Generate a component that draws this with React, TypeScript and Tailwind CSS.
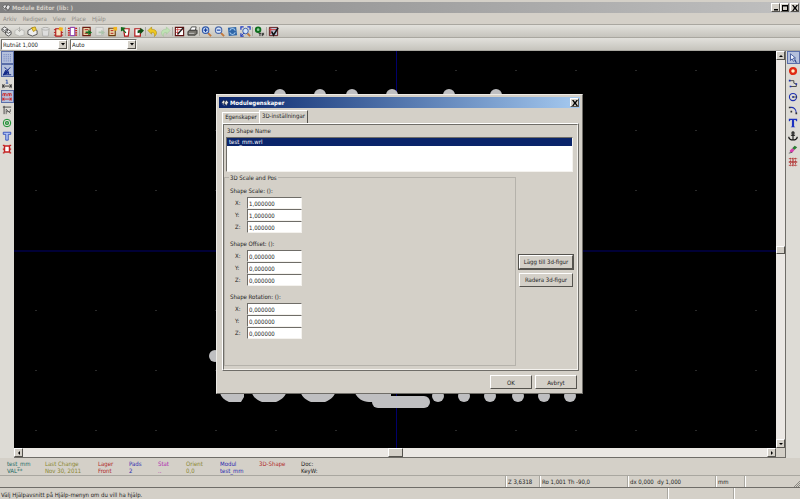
import React from 'react';
import clsx from 'clsx';

const raised = 'border border-t-white border-l-white border-r-[#55534e] border-b-[#55534e] bg-[#d4d0c8]';
const sunken = 'border border-t-[#6f6d68] border-l-[#6f6d68] border-r-[#f4f2ee] border-b-[#f4f2ee]';

// All icons share a 12x12 drawing area
const icons: Record<string, React.ReactNode> = {
  module: (
    <g stroke="#333" strokeWidth=".7">
      <path d="M1 5l3-3 2 2-2 4zM5 6l3-4 3 3-3 5z" fill="#e4e4e4" />
      <path d="M2 7l3 3" stroke="#eee" />
    </g>
  ),
  libSelect: (
    <g fill="#eee" stroke="#444" strokeWidth=".9">
      <path d="M1 3l3-2 3 2v3L4 7 1 5zM5 6l3-2 3 2v3l-3 2-3-2z" />
      <path d="M1 3l3 2 3-2M5 6l3 2 3-2" />
    </g>
  ),
  libSave: (
    <g fill="#e6e6e2" stroke="#b4b4b0" strokeWidth=".8">
      <path d="M1 5l4-2 6 2v5l-5 1-5-2z" />
      <path d="M6 1v5M4 4l2 2 2-2" stroke="#a4a4a0" />
    </g>
  ),
  libNew: (
    <g stroke="#444" strokeWidth=".9">
      <path d="M1 5l5-3 5 3v4l-5 2-5-2z" fill="#eee" />
      <path d="M5 2l4-1 1 3-3 2z" fill="#f2d23c" stroke="#b08a10" />
    </g>
  ),
  libDel: (
    <g fill="#ddd" stroke="#a4a4a0" strokeWidth=".8">
      <path d="M2 3h8l-1 8H3z" />
      <ellipse cx="6" cy="3" rx="4" ry="1.5" />
    </g>
  ),
  newModule: (
    <g>
      <path d="M3 3h6v8H3z" fill="#f7e3c0" stroke="#b01818" strokeWidth="1.2" />
      <path d="M1 4h2M1 7h2M1 10h2M9 7h2M9 10h2" stroke="#b01818" />
      <path d="M7 1l4 1-1 4-4-2z" fill="#f2b51d" />
    </g>
  ),
  chip: (
    <g>
      <path d="M3.5 1.5h5v9h-5z" fill="#fff" stroke="#7a1fa0" />
      <path d="M1 2.5h2M1 5h2M1 7.5h2M1 10h2M9 2.5h2M9 5h2M9 7.5h2M9 10h2" stroke="#c31818" strokeWidth="1.4" />
    </g>
  ),
  load: (
    <g>
      <path d="M2 1.5h8v9H2z" fill="#e8d3a8" stroke="#6b1c10" strokeWidth="1.2" />
      <path d="M4 4h4M4 8h4" stroke="#b01818" />
      <path d="M5 6h3V4l4 3-4 3V8H5z" fill="#126b1c" />
    </g>
  ),
  loadDim: (
    <g opacity=".5">
      <path d="M2 1.5h8v9H2z" fill="#eee" stroke="#aaa" />
      <path d="M5 6h3V4l4 3-4 3V8H5z" fill="#8aba90" />
    </g>
  ),
  moduleStar: (
    <g>
      <path d="M2 2.5h7v8H2z" fill="#e8d3a8" stroke="#6b3c10" strokeWidth="1.2" />
      <path d="M4 5h3M4 8h3" stroke="#b01818" />
      <path d="M7 1h4v4H7z" fill="#f2b51d" />
    </g>
  ),
  importIc: (
    <g>
      <path d="M4 3h6l-1 8H5z" fill="#fff" stroke="#b01818" strokeWidth="1.3" />
      <path d="M1 1l5 1-2 2 3 3-1 1-3-3-2 1z" fill="#126b1c" />
    </g>
  ),
  exportIc: (
    <g>
      <path d="M2 3h6v8H2z" fill="#fff" stroke="#b01818" strokeWidth="1.3" />
      <path d="M5 5l3-1V2l4 3-4 4V7L5 8z" fill="#0d4d16" />
    </g>
  ),
  undo: <path d="M1 5l4-4v2.5c6 0 7 5 3 8 1-4-1-4.5-3-4.5V9z" fill="#efc820" stroke="#a98708" strokeWidth=".6" />,
  redo: <path d="M11 5L7 1v2.5c-6 0-7 5-3 8-1-4 1-4.5 3-4.5V9z" fill="#bfe2b4" stroke="#9dc492" strokeWidth=".5" />,
  settings: (
    <g>
      <path d="M1.5 1.5h9v9h-9z" fill="#fff" stroke="#5c1212" strokeWidth="1.2" />
      <path d="M2 4h8M2 7h4M4 2v8" stroke="#c33" strokeWidth=".8" />
      <path d="M4 9l6-7" stroke="#222" strokeWidth="1.5" />
    </g>
  ),
  print: (
    <g stroke="#222" strokeWidth=".8">
      <path d="M3 5l2-4h5L9 5z" fill="#fff" />
      <path d="M1 6l2-1.5h8V8l-2 2H1z" fill="#77756e" />
      <path d="M2 8h6" stroke="#ddd" />
    </g>
  ),
  zoomIn: (
    <g fill="none">
      <path d="M7.5 7.5L11 11" stroke="#c4783a" strokeWidth="2" />
      <circle cx="5" cy="4.5" r="3.5" fill="#c8dcf6" stroke="#3158a8" strokeWidth="1.2" />
      <path d="M3 4.5h4M5 2.5v4" stroke="#123a9c" strokeWidth="1.2" />
    </g>
  ),
  zoomOut: (
    <g fill="none">
      <path d="M7.5 7.5L11 11" stroke="#c4783a" strokeWidth="2" />
      <circle cx="5" cy="4.5" r="3.5" fill="#d8e6fa" stroke="#4a68a8" strokeWidth="1.2" />
      <path d="M3 4.5h4" stroke="#123a9c" strokeWidth="1.2" />
    </g>
  ),
  refresh: (
    <g>
      <path d="M1 2l9-1 1 9-9 1z" fill="#2f66a8" />
      <path d="M3 5c1-3 5-3 6 0M9 7c-1 3-5 3-6 0" stroke="#9cc4ea" fill="none" strokeWidth="1.2" />
    </g>
  ),
  zoomFit: (
    <g fill="none">
      <path d="M1 4V1h3M8 1h3v3M1 8v3h3" stroke="#1d38c0" strokeWidth="1.3" />
      <path d="M8 8l3 3" stroke="#c4783a" strokeWidth="2" />
      <circle cx="6" cy="5.5" r="3" fill="#d4e4f8" stroke="#3158a8" />
      <path d="M1.5 10.500l3-3" stroke="#1d38c0" />
    </g>
  ),
  pad: (
    <g>
      <circle cx="4.5" cy="4" r="2.500" fill="#8fd09a" stroke="#0d6d1d" strokeWidth="2" />
      <path d="M5 8h3M6.500 8v3M9 11V8h2M9 9.500h2" stroke="#222" fill="none" />
    </g>
  ),
  check: (
    <g>
      <path d="M1.5 1.5h9v9h-9z" fill="#b9c4d8" stroke="#5c1212" />
      <path d="M3 2v7M1 4h8" stroke="#c33" />
      <path d="M4 6l2 4 5-8" stroke="#111" strokeWidth="1.8" fill="none" />
    </g>
  ),
  grid: <path d="M2 2h9M2 4.5h9M2 7h9M2 9.5h9" stroke="#4a62b0" strokeDasharray="1 1.5" />,
  polar: (
    <g fill="none" stroke="#152a88" strokeWidth="1.2">
      <path d="M2 10.500h9M2 10.500l8-9M3 2c3 1 5 4 5 8" />
      <path d="M1.500 11l3-6 3 3z" fill="#152a88" />
    </g>
  ),
  inch: (
    <g stroke="#222" fill="none">
      <path d="M6 1v4M4.5 1.5H6M4.5 5h3" stroke="#244aa8" />
      <path d="M1 8.5h10M3 6.5L1 8.5l2 2M9 6.5l2 2-2 2M1 6v5M11 6v5" />
    </g>
  ),
  mm: (
    <g fill="none">
      <path d="M1 5V2h2v3M3 2h2v3M7 5V2h2v3M9 2h2v3" stroke="#d02020" />
      <path d="M1 8.5h10M3 7L1 8.5 3 10M9 7l2 1.5L9 10M1 6.5v4M11 6.5v4" stroke="#d02020" />
    </g>
  ),
  cursor: (
    <g stroke="#333" fill="none">
      <path d="M1 2.5h10M2.5 1v10" />
      <path d="M5 5v6M5 5l5 5M5 8h5V5" stroke="#555" />
    </g>
  ),
  padSketch: (
    <g fill="none" stroke="#189030">
      <circle cx="6" cy="6" r="4.5" strokeWidth="1.2" />
      <circle cx="6" cy="6" r="1.7" strokeWidth="1.5" />
    </g>
  ),
  textSketch: <path d="M1.5 1.5h9v2.5h-3v7h-3v-7h-3z" fill="#b4c6f4" stroke="#2545b8" />,
  edgeSketch: (
    <g>
      <path d="M3 2.5h6v7H3z" fill="#fff" stroke="#c32020" strokeWidth="1.8" />
      <path d="M1 1.5h2M1 6h2M1 10.5h2M9 1.5h2M9 6h2M9 10.5h2" stroke="#c32020" strokeWidth="1.5" />
    </g>
  ),
  arrow: (
    <g>
      <path d="M3 1v8l2-2 1.5 3 1.5-1-1.5-3H9z" fill="#eef3ff" stroke="#243e88" strokeWidth=".9" />
      <path d="M9 8v3h2" stroke="#243e88" fill="none" />
    </g>
  ),
  addPad: <circle cx="6" cy="6" r="3.5" fill="#fff2c8" stroke="#e02a14" strokeWidth="2.800" />,
  line: (
    <g fill="none">
      <path d="M2 2h5v3l3 1v3H3" stroke="#333" />
      <path d="M1 1h2v2H1zM9 5h2v2H9zM2 8h2v2H2z" fill="#1e30b0" />
    </g>
  ),
  circle: (
    <g fill="none">
      <circle cx="6" cy="6" r="4.3" stroke="#1e30b0" strokeWidth="1.3" />
      <circle cx="6" cy="6" r="1.2" fill="#1e30b0" />
      <path d="M6 6h5" stroke="#333" />
    </g>
  ),
  arc: (
    <g fill="none">
      <path d="M2 3c5-1 8 2 8 7" stroke="#1e30b0" strokeWidth="1.3" />
      <path d="M1 2h2v2H1zM3 7h2v2H3zM9 9h2v2H9z" fill="#333" />
    </g>
  ),
  text: <path d="M1 1h10v3h-1L9 2.5H7.3V10l1.5 1H3.2l1.5-1V2.5H3L2 4H1z" fill="#1c32c0" />,
  anchor: (
    <g fill="none" stroke="#111" strokeWidth="1.3">
      <circle cx="6" cy="2.3" r="1.3" />
      <path d="M6 3.5V11M3.5 5h5M1 7c.5 5 9.5 5 10 0M1 7v2M11 7v2" />
    </g>
  ),
  eraser: (
    <g>
      <path d="M2 8l3-3 3 2-3 3.5H3z" fill="#d63fae" />
      <path d="M5 5l3-3 3 2-3 3z" fill="#2c7d34" />
      <path d="M1 11l4-1" stroke="#555" />
    </g>
  ),
  gridOrigin: (
    <g stroke="#b03030">
      <path d="M1 2h10M1 6h10M1 10h10M3 1v10M9 1v10" strokeDasharray="2 1" />
      <path d="M6 1v10M1 6h10" strokeWidth="1.3" />
    </g>
  ),
};

const Icon = ({ name, className = 'size-[11px]' }: { name: string; className?: string }) => (
  <svg viewBox="0 0 12 12" className={clsx('shrink-0', className)} aria-hidden="true">
    {icons[name]}
  </svg>
);

const toolbar = [
  'libSelect', 'libSave', 'libNew', 'libDel', 'newModule', '|', 'chip', '|', 'load', 'loadDim', 'moduleStar',
  'importIc', 'exportIc', '|', 'undo', 'redo', '|', 'settings', 'print', '|', 'zoomIn', 'zoomOut', 'refresh',
  'zoomFit', '|', 'pad', '|', 'check',
];
const leftTools = ['grid', 'polar', 'inch', 'mm', 'cursor', 'padSketch', 'textSketch', 'edgeSketch'];
const leftActive = ['grid', 'polar', 'mm'];
const rightTools = ['arrow', 'addPad', 'line', 'circle', 'arc', 'text', 'anchor', 'eraser', 'gridOrigin'];

const info = [
  { top: 'test_mm', bottom: 'VAL**', color: 'text-[#226a66]' },
  { top: 'Last Change', bottom: 'Nov 30, 2011', color: 'text-[#8a8730]' },
  { top: 'Lager', bottom: 'Front', color: 'text-[#b02a2a]' },
  { top: 'Pads', bottom: '2', color: 'text-[#2a2ab0]' },
  { top: 'Stat', bottom: '..', color: 'text-[#b02ab0]' },
  { top: 'Orient', bottom: '0,0', color: 'text-[#8a8730]' },
  { top: 'Modul', bottom: 'test_mm', color: 'text-[#2a2ab0]' },
  { top: '3D-Shape', bottom: '', color: 'text-[#b02a2a]' },
  { top: 'Doc:', bottom: 'KeyW:', color: 'text-[#222]' },
];

const vectors = [
  { title: 'Shape Scale: ():', id: 'scale', value: '1,000000' },
  { title: 'Shape Offset: ():', id: 'offset', value: '0,000000' },
  { title: 'Shape Rotation: ():', id: 'rotation', value: '0,000000' },
];

const Arrow = ({ d }: { d: string }) => (
  <svg viewBox="0 0 6 6" className="size-[6px]" aria-hidden="true">
    <path d={d} fill="#000" />
  </svg>
);

const ArrowButton = ({ label, d }: { label: string; d: string }) => (
  <button aria-label={label} className={clsx('flex size-[9px] shrink-0 items-center justify-center', raised)}>
    <Arrow d={d} />
  </button>
);

const Combo = ({ label, value }: { label: string; value: string }) => (
  <div className={clsx('relative h-[11px] w-[67px] bg-white', sunken)}>
    <select aria-label={label} className="block h-[9px] w-full appearance-none bg-white pl-px leading-[9px] outline-none">
      <option>{value}</option>
    </select>
    <span className={clsx('pointer-events-none absolute inset-y-0 right-0 flex w-[9px] items-center justify-center', raised)}>
      <Arrow d="M1 2h4L3 4.5z" />
    </span>
  </div>
);

const Tools = ({ names, active }: { names: string[]; active: string[] }) => (
  <div className="flex w-[14px] shrink-0 flex-col items-center bg-[#dddbd5]">
    {names.map((name) => (
      <button
        key={name}
        aria-label={name}
        className={clsx(
          'flex h-[13px] w-[13px] items-center justify-center',
          active.includes(name) && 'border border-[#5a6ea8] bg-[#b4c0dc]',
        )}
      >
        <Icon name={name} className="size-[10px]" />
      </button>
    ))}
  </div>
);

const crossX = [-6, -5, -4, -3, -2, -1, 1, 2, 3, 4, 5, 6];
const crossY = [-3, -2, -1, 1, 2, 3];

const Board = () => (
  <svg className="absolute inset-0 size-full" aria-hidden="true">
    <path d="M382.5 0v2000M0 200h2000" stroke="#00006c" />
    {crossX.map((x) =>
      crossY.map((y) => <path key={`${x},${y}`} d={`M${381 + x * 60} ${199.5 + y * 60}h2`} stroke="#2a2a2a" />),
    )}
    <g fill="#bfbfc1">
      {[280, 320, 352, 392, 449, 496].map((x) => (
        <circle key={x} cx={x - 14} cy="44" r="6" />
      ))}
      {[438, 464, 490, 518, 544, 570].map((x) => (
        <circle key={x} cx={x - 14} cy="345" r="6" />
      ))}
      <circle cx="201" cy="305" r="6" />
      <path d="M206 342h24v4l-3 5h-12c-5-2-8-5-9-9zM238 342h34c-1 4-5 7-10 9h-14c-5-2-9-5-10-9zM287 342h34c-1 4-5 7-10 9h-14c-5-2-9-5-10-9zM341 342h36v9h-22c-6 0-12-4-14-9z" />
      <rect x="358" y="345" width="58" height="12" rx="6" />
    </g>
  </svg>
);

const DialogButton = ({ children, className }: { children: React.ReactNode; className?: string }) => (
  <button className={clsx('h-[14px] shrink-0 whitespace-nowrap text-center leading-[11px]', raised, className)}>
    {children}
  </button>
);

const ModuleDialog = () => (
  <div
    role="dialog"
    aria-label="Modulegenskaper"
    className="absolute top-[94px] left-[216px] flex h-[300px] w-[367px] flex-col border border-t-[#eceae6] border-r-[#6f6d68] border-b-[#6f6d68] border-l-[#eceae6] bg-[#d4d0c8] p-[2px]"
  >
    <div className="flex h-[11px] shrink-0 items-center bg-linear-to-r from-[#0a246a] to-[#a6caf0] pr-px pl-[2px] text-white">
      <Icon name="module" className="size-[8px]" />
      <span className="ml-px grow leading-[10px] font-bold">Modulegenskaper</span>
      <button aria-label="Stäng" className={clsx('flex size-[9px] items-center justify-center', raised)}>
        <Arrow d="M0 0h1.5L3 2 4.5 0H6L4 3l2 3H4.5L3 4 1.5 6H0l2-3z" />
      </button>
    </div>

    <div role="tablist" className="flex h-[15px] shrink-0 items-end pl-[3px]">
      <button role="tab" aria-selected="false" className="h-[11px] w-[37px] border-t border-l border-white pb-[2px] text-center leading-[8px]">
        Egenskaper
      </button>
      <button
        role="tab"
        aria-selected="true"
        className="h-[13px] w-[49px] border-t border-r border-l border-t-white border-r-[#55534e] border-l-white pb-[2px] text-center leading-[8px]"
      >
        3D-inställningar
      </button>
    </div>

    <div className="mr-px ml-[3px] flex grow flex-col border border-t-white border-r-[#6f6d68] border-b-[#6f6d68] border-l-white">
      <div className="flex grow flex-col border border-t-[#6f6d68] border-r-[#f4f2ee] border-b-[#f4f2ee] border-l-[#6f6d68] pr-[4px] pb-[3px]">
        <label htmlFor="shape-name" className="h-[12px] shrink-0 pt-px pl-[3px] leading-[10px]">3D Shape Name</label>
        <div id="shape-name" role="listbox" className={clsx('ml-[2px] h-[35px] shrink-0 bg-white', sunken)}>
          <div role="option" aria-selected="true" className="h-[8px] bg-[#0a246a] pl-[2px] leading-[8px] text-white">
            test_mm.wrl
          </div>
        </div>
        <div className="flex grow pt-[3px]">
          <fieldset className="relative mt-[2px] grow border border-[#b5b2ab] pt-[8px] pl-[5px]">
            <legend className="absolute -top-[5px] left-[4px] bg-[#d4d0c8] px-px leading-[9px]">3D Scale and Pos</legend>
            {vectors.map((v) => (
              <div key={v.id} className="mb-[6px]">
                <div className="h-[11px] leading-[10px]">{v.title}</div>
                {['X', 'Y', 'Z'].map((axis) => (
                  <div key={axis} className="flex h-[12px] items-center">
                    <label htmlFor={`${v.id}-${axis}`} className="w-[17px] pl-[5px]">{axis}:</label>
                    <input
                      id={`${v.id}-${axis}`}
                      defaultValue={v.value}
                      className={clsx('h-[12px] w-[55px] bg-white pl-px leading-[9px] outline-none', sunken)}
                    />
                  </div>
                ))}
              </div>
            ))}
          </fieldset>
          <div className="flex shrink-0 flex-col justify-center gap-[4px] pl-[3px]">
            <DialogButton className="w-[54px] outline outline-[#55534e]">Lägg till 3d-figur</DialogButton>
            <DialogButton className="w-[54px]">Radera 3d-figur</DialogButton>
          </div>
        </div>
      </div>
    </div>

    <div className="flex h-[20px] shrink-0 items-center justify-end gap-[3px] pt-[2px] pr-[3px]">
      <DialogButton className="w-[42px]">OK</DialogButton>
      <DialogButton className="w-[42px]">Avbryt</DialogButton>
    </div>
  </div>
);

const App = () => {
  const bar = 'flex shrink-0 items-center border-b border-b-[#a9a7a0] bg-linear-to-b from-[#e2e1dc] to-[#c6c4bd]';
  const cell = 'h-full shrink-0 border-l border-l-white pl-px shadow-[-1px_0_0_#a9a7a0]';

  return (
    <div className="relative flex h-screen flex-col overflow-hidden bg-[#d4d0c8] font-['DejaVu_Sans_Condensed','DejaVu_Sans',sans-serif] text-[6px] leading-[8px] text-[#222]">
      {/* Title bar */}
      <header className="mt-[2px] flex h-[11px] shrink-0 items-center bg-linear-to-r from-[#808080] to-[#c0c0c0] pr-px pl-[2px] text-[#d4d0c8]">
        <Icon name="module" className="size-[9px]" />
        <h1 className="ml-px grow leading-[10px] font-bold">Module Editor (lib: )</h1>
        <button aria-label="Minimera" className={clsx('flex size-[9px] items-center justify-center', raised)}>
          <Arrow d="M1 4h4v1.5H1z" />
        </button>
        <button aria-label="Maximera" className={clsx('mr-px flex size-[9px] items-center justify-center', raised)}>
          <Arrow d="M0 0h6v6H0V1.500h1V5h4V1.500H0z" />
        </button>
        <button aria-label="Stäng" className={clsx('flex size-[9px] items-center justify-center', raised)}>
          <Arrow d="M0 0h1.5L3 2 4.5 0H6L4 3l2 3H4.5L3 4 1.5 6H0l2-3z" />
        </button>
      </header>

      <nav className="flex h-[11px] shrink-0 items-center gap-[6px] pl-[3px] text-[#8c8a84]">
        {['Arkiv', 'Redigera', 'View', 'Place', 'Hjälp'].map((item) => (
          <button key={item}>{item}</button>
        ))}
      </nav>

      {/* Toolbars */}
      <div className={clsx('h-[14px] border-t border-t-[#a9a7a0]', bar)}>
        {toolbar.map((name, i) =>
          name === '|' ? (
            <span key={i} className="h-[9px] w-px bg-[#aaa8a0]" />
          ) : (
            <button key={i} aria-label={name} className="flex w-[13px] justify-center">
              <Icon name={name} />
            </button>
          ),
        )}
      </div>
      <div className={clsx('h-[13px] gap-[2px] pl-px', bar)}>
        <Combo label="Rutnät" value="Rutnät 1,000" />
        <Combo label="Zoom" value="Auto" />
      </div>

      {/* Drawing area */}
      <main className="flex min-h-0 grow">
        <Tools names={leftTools} active={leftActive} />
        <div className="flex min-w-0 grow flex-col border-r border-b border-[#6f6d68]">
          <div className="flex min-h-0 grow">
            <div className="relative grow overflow-hidden bg-black">
              <Board />
            </div>
            <div className="flex w-[9px] shrink-0 flex-col justify-between bg-[#ebe8e4]">
              <ArrowButton label="Upp" d="M1 4h4L3 2z" />
              <span className={clsx('h-[8px]', raised)} />
              <ArrowButton label="Ned" d="M1 2h4L3 4z" />
            </div>
          </div>
          <div className="flex h-[9px] shrink-0 bg-[#ebe8e4]">
            <div className="flex grow justify-between">
              <ArrowButton label="Vänster" d="M4 1v4L2 3z" />
              <span className={clsx('w-[15px]', raised)} />
              <ArrowButton label="Höger" d="M2 1v4l2-2z" />
            </div>
            <span className="w-[9px] bg-[#d4d0c8]" />
          </div>
        </div>
        <Tools names={rightTools} active={['arrow']} />
      </main>

      {/* Message panel */}
      <section className="mt-px grid h-[17px] shrink-0 grid-cols-[38px_53px_31px_29px_28px_34px_39px_42px_1fr] border-b border-[#a9a7a0] pt-px pl-[7px] leading-[7px]">
        {info.map((item) => (
          <div key={item.top} className={clsx('whitespace-nowrap', item.color)}>
            <p>{item.top}</p>
            <p>{item.bottom}</p>
          </div>
        ))}
      </section>

      <div className="flex h-[11px] shrink-0 justify-end leading-[11px] whitespace-nowrap">
        <span className={clsx('w-[34px]', cell)}>Z 3,6318</span>
        <span className={clsx('w-[88px]', cell)}>Ro 1,001 Th -90,0</span>
        <span className={clsx('w-[88px]', cell)}>dx 0,000&nbsp; dy 1,000</span>
        <span className={clsx('w-[29px]', cell)}>mm</span>
        <span className={clsx('flex w-[55px] items-end justify-end', cell)}>
          <svg viewBox="0 0 6 6" className="size-[6px]" aria-hidden="true">
            <path d="M0 6l6-6M2 6l4-4M4 6l2-2" stroke="#8a8882" />
          </svg>
        </span>
      </div>
      <footer className="flex h-[13px] shrink-0 border-t border-b border-t-[#6f6d68] border-b-white leading-[13px] whitespace-nowrap">
        <span className="grow pl-px">Välj Hjälpavsnitt på Hjälp-menyn om du vill ha hjälp.</span>
        <span className={clsx('w-[66px]', cell)} />
        <span className={clsx('w-[66px]', cell)} />
      </footer>

      <ModuleDialog />
    </div>
  );
};

export default App;
